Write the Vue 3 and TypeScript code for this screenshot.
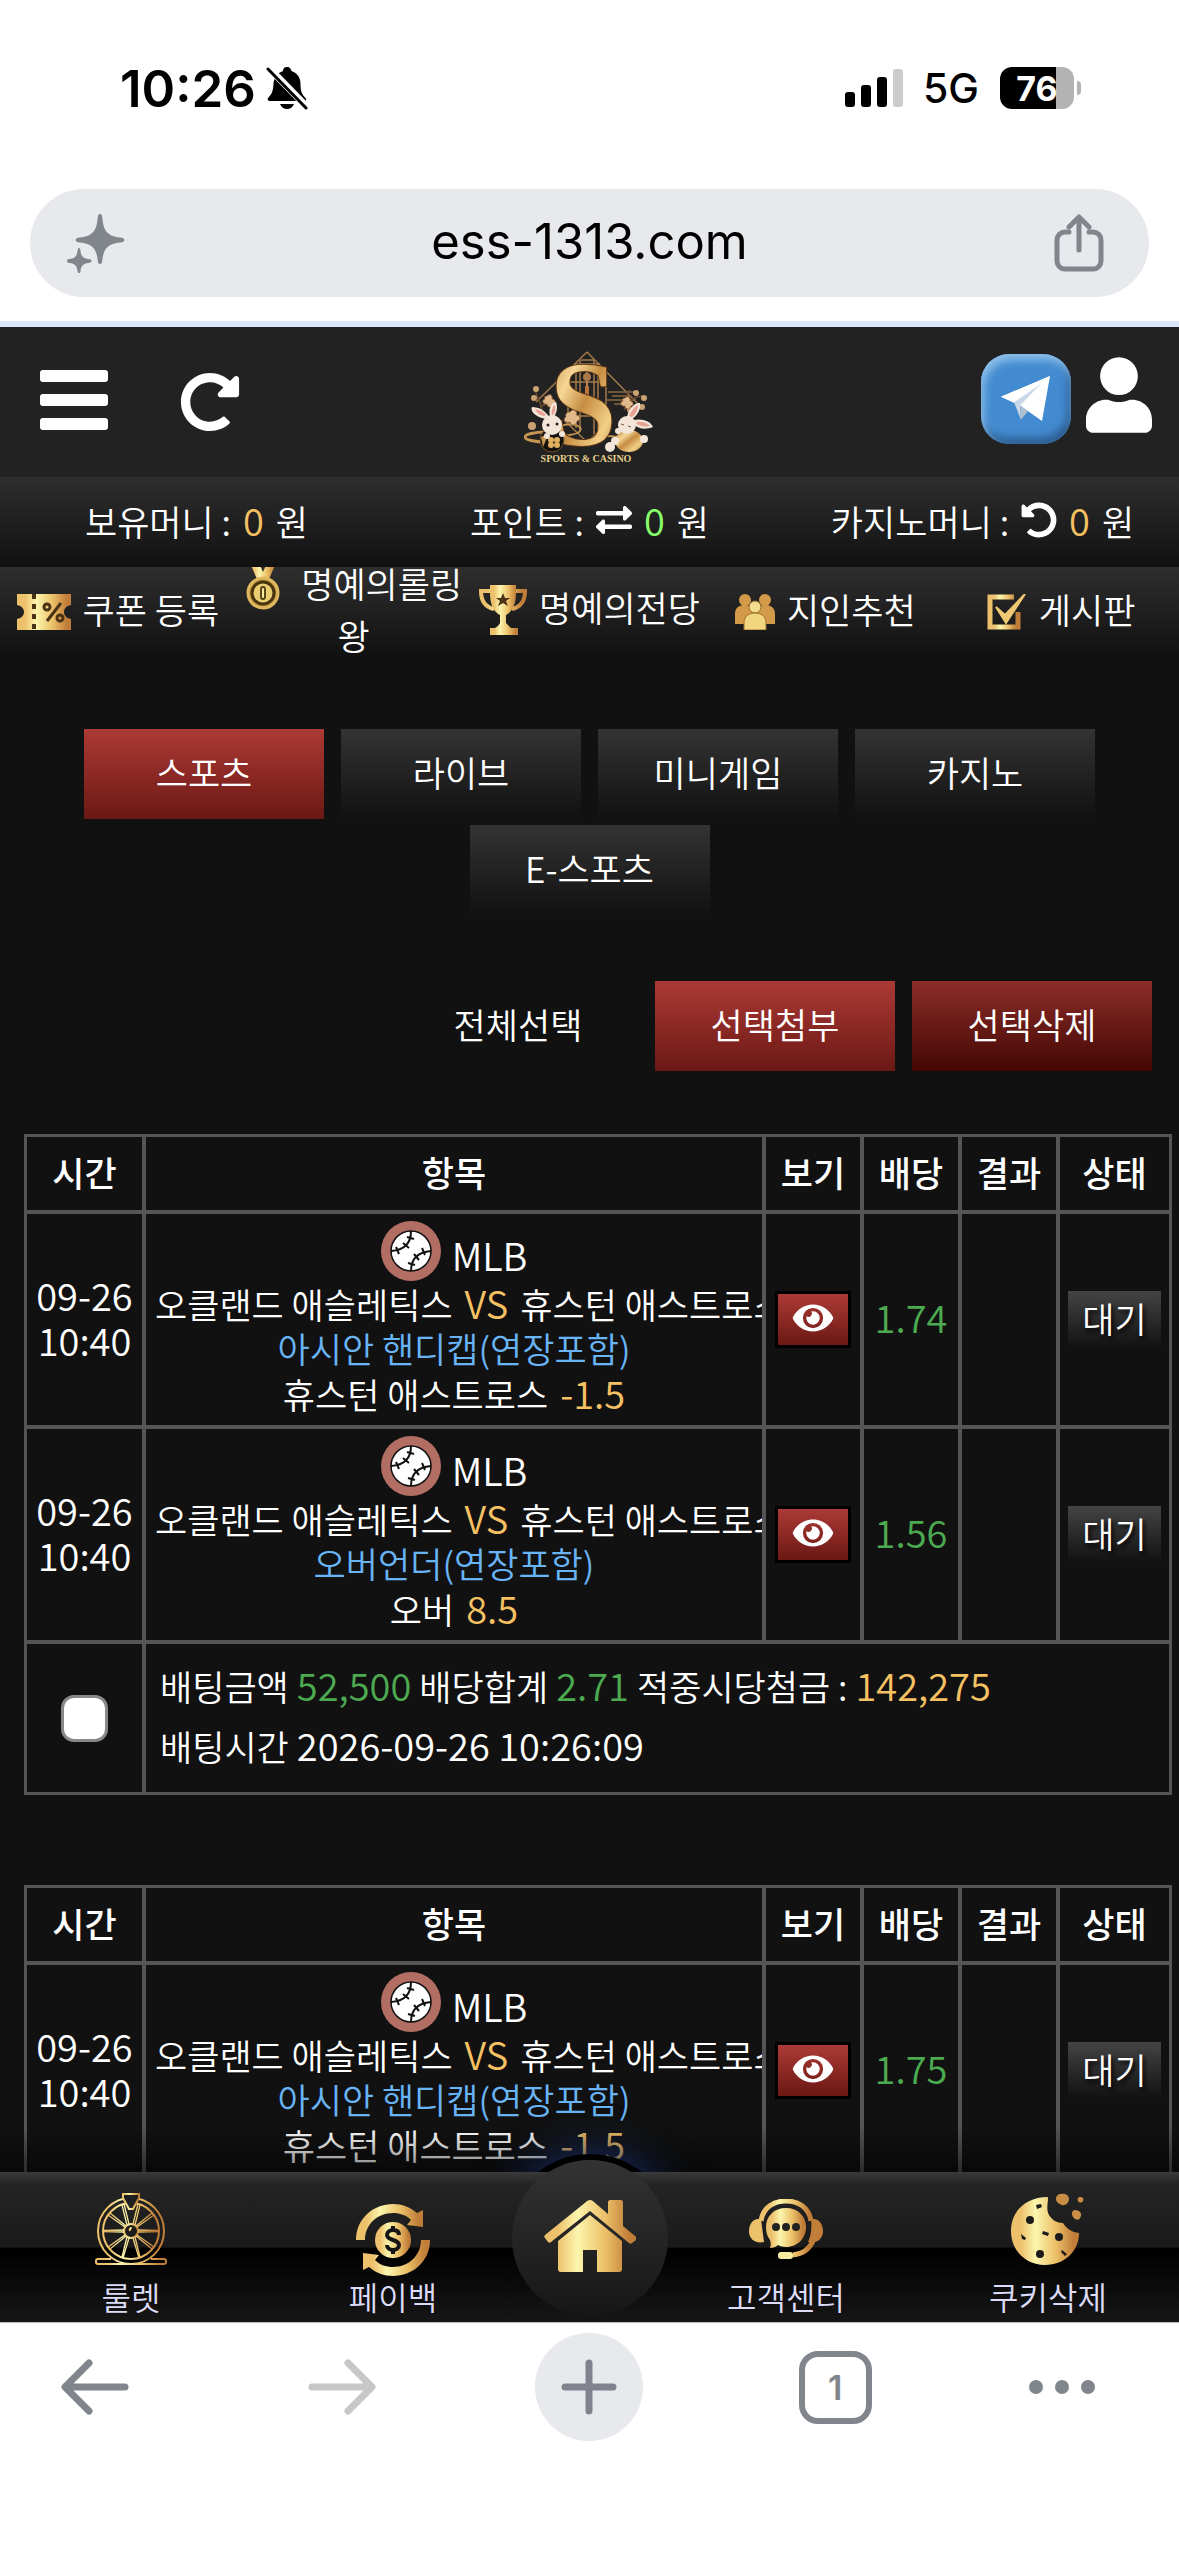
<script setup lang="ts">
import { ref } from 'vue'

interface Pick {
  market: string
  side: string
  line: string
  odds: string
}

interface Slip {
  id: number
  picks: Pick[]
  summary?: { stake: string; odds: string; payout: string; placedAt: string }
}

const tabs = ['스포츠', '라이브', '미니게임', '카지노', 'E-스포츠']
const activeTab = ref('스포츠')
const columns = ['시간', '항목', '보기', '배당', '결과', '상태']
const address = ref('ess-1313.com')

const slips: Slip[] = [
  {
    id: 1,
    picks: [
      { market: '아시안 핸디캡(연장포함)', side: '휴스턴 애스트로스', line: '-1.5', odds: '1.74' },
      { market: '오버언더(연장포함)', side: '오버', line: '8.5', odds: '1.56' },
    ],
    summary: { stake: '52,500', odds: '2.71', payout: '142,275', placedAt: '2026-09-26 10:26:09' },
  },
  {
    id: 2,
    picks: [
      { market: '아시안 핸디캡(연장포함)', side: '휴스턴 애스트로스', line: '-1.5', odds: '1.75' },
    ],
  },
]
</script>

<template>
  <div class="screen">
    <svg class="defs" width="0" height="0" aria-hidden="true">
      <defs>
        <linearGradient id="gold" x1="0" x2="1" y1="0" y2="0">
          <stop offset="0" stop-color="#edc06b" />
          <stop offset="0.14" stop-color="#edc06b" />
          <stop offset="0.36" stop-color="#fbf5ad" />
          <stop offset="0.66" stop-color="#ecc068" />
          <stop offset="0.92" stop-color="#c17e39" />
          <stop offset="1" stop-color="#c17e39" />
        </linearGradient>
        <linearGradient id="goldDeep" x1="0" x2="1" y1="0" y2="1">
          <stop offset="0" stop-color="#b67f37" />
          <stop offset="0.3" stop-color="#f6d795" />
          <stop offset="0.5" stop-color="#c68d43" />
          <stop offset="0.75" stop-color="#f3cf86" />
          <stop offset="1" stop-color="#a86f2c" />
        </linearGradient>
      </defs>
    </svg>

    <header class="status">
      <div class="status-left">
        <span class="clock">10:26</span>
        <svg width="42" height="44" viewBox="0 0 42 44">
          <path d="M21 1c3 0 4 2 4.500 4 6 2 9 7 9 13 0 8 2 11 5 14 1 1 1 3-1 3H4c-2 0-3-2-2-3 4-4 5-7 5.500-14C8 12 11 7 17 5c0-2 1-4 4-4z" fill="#000" />
          <path d="M14 38h14c-1 3-4 5-7 5s-6-2-7-5z" fill="#000" />
          <path d="M2 1l40 41" stroke="#fff" stroke-width="7" />
          <path d="M2 3l38 39" stroke="#000" stroke-width="3" stroke-linecap="round" />
        </svg>
      </div>
      <div class="status-right">
        <svg width="58" height="38" viewBox="0 0 58 38">
          <rect x="0" y="23" width="10" height="15" rx="3" />
          <rect x="16" y="16" width="10" height="22" rx="3" />
          <rect x="32" y="8" width="10" height="30" rx="3" />
          <rect x="48" y="0" width="10" height="38" rx="3" fill="#ccc" />
        </svg>
        <span class="network">5G</span>
        <div class="battery"><span>76</span></div>
        <i class="battery-tip"></i>
      </div>
    </header>

    <div class="address">
      <button class="plain" aria-label="AI">
        <svg width="58" height="60" viewBox="0 0 58 60" fill="#80868b">
          <path d="M33 1c1.500 0 2 1 2.200 3 1.200 14 5 19 18 20.500 3 .3 4 1 4 2.500s-1 2.200-4 2.500c-13 1.500-16.800 6.500-18 18.500-.2 2-.7 3-2.200 3s-2-1-2.200-3c-1.200-12-5-17-18-18.500-3-.3-4-1-4-2.500s1-2.200 4-2.500c13-1.500 16.800-6.500 18-20.500 .2-2 .7-3 2.200-3z" />
          <path d="M12 35c1 0 1.300 1 1.500 3 .6 5 2.500 7.500 8 8 2 .2 3 .8 3 2s-1 1.800-3 2c-5.500.5-7.400 3-8 8-.2 1.500-.5 2-1.500 2s-1.300-.5-1.500-2c-.6-5-2.500-7.500-8-8-2-.2-2.500-.8-2.500-2s.5-1.800 2.500-2c5.500-.5 7.400-3 8-8 .2-2 .5-3 1.500-3z" />
        </svg>
      </button>
      <input v-model="address" class="url" aria-label="address" />
      <button class="plain" aria-label="share">
        <svg width="50" height="58" viewBox="0 0 50 58" fill="none" stroke="#80868b" stroke-width="5" stroke-linecap="round" stroke-linejoin="round">
          <path d="M15 18h-4a8 8 0 0 0-8 8v21a8 8 0 0 0 8 8h28a8 8 0 0 0 8-8V26a8 8 0 0 0-8-8h-4" />
          <path d="M25 36V4M15 13L25 3l10 10" />
        </svg>
      </button>
    </div>
    <div class="progress"></div>

    <main class="site">
      <div class="site-head">
        <div class="head-left">
          <button class="plain burger" aria-label="menu"><i></i><i></i><i></i></button>
          <button class="plain" aria-label="refresh">
            <svg width="60" height="60" viewBox="0 0 512 512" fill="#fff">
              <path d="M256.455 8c66.269.119 126.437 26.233 170.859 68.685l35.715-35.715C478.149 25.851 504 36.559 504 57.941V192c0 13.255-10.745 24-24 24H345.941c-21.382 0-32.090-25.851-16.971-40.971l41.750-41.750c-30.864-28.899-70.801-44.907-113.230-45.273-92.398-.798-170.283 73.977-169.484 169.442C88.764 348.009 162.184 424 256 424c41.127 0 79.997-14.678 110.629-41.556 4.743-4.161 11.906-3.908 16.368.553l39.662 39.662c4.872 4.872 4.631 12.815-.482 17.433C378.202 479.813 319.926 504 256 504 119.034 504 8.001 392.967 8 256.002 7.999 119.193 119.646 7.755 256.455 8z" />
            </svg>
          </button>
        </div>

        <a class="logo" href="#" aria-label="SPORTS &amp; CASINO">
          <svg width="132" height="114" viewBox="0 0 132 114">
            <g fill="none" stroke="#a37a49" stroke-width="1.500">
              <path d="M63 2L12 52M63 2l55 56M63 92L40 70M63 92l24-22" />
              <path d="M56 10v70M52 14v64M70 10v74M74 14v66M44 22v50M82 22v54M50 14h26M44 32h38M44 54h38M44 66h38M57 10h13" />
              <path d="M84 42h26M88 46h18M82 50h30M90 54h14" stroke="#8a6840" />
              <path d="M18 60C16 50 12 46 11 38M18 56c5-2 8-6 8-12M100 60c4-10 10-14 20-14M104 56c-2-8-2-12 2-16" stroke="#6d4b30" />
            </g>
            <ellipse cx="22" cy="87" rx="21" ry="5" fill="none" stroke="#c69552" stroke-width="3" />
            <path d="M36 76c12-4 24 0 20 5s-14 3-20 7M70 88c10-4 22-1 34 0" fill="none" stroke="#c69552" stroke-width="2" />
            <g fill="#c9a272">
              <circle cx="12" cy="39" r="3" /><circle cx="10" cy="48" r="3" /><circle cx="8" cy="76" r="4" />
              <circle cx="112" cy="43" r="3" /><circle cx="120" cy="48" r="3" /><circle cx="106" cy="60" r="3" /><circle cx="118" cy="57" r="3" />
            </g>
            <path d="M63 20v26" stroke="#b9824e" stroke-width="2" />
            <circle cx="63" cy="27" r="4" fill="#a97748" />
            <path d="M61 36h4v10h-4z" fill="#b9743e" />
            <text x="59" y="95" text-anchor="middle" class="logo-s" fill="url(#goldDeep)">S</text>
            <g fill="#e2b98a" stroke="#8f6238" stroke-width="0.800">
              <path d="M23 46c3-3 6 0 5 3 4 0 4 5 1 5-1 4-6 4-6 0-4 1-6-4-2-5-1-2 0-3 2-3z" />
              <path d="M46 62c3-4 8-1 6 3 5 0 5 6 1 6 0 5-7 5-7 1-4 2-8-3-4-5-1-3 1-5 4-5z" />
              <path d="M101 48c3-3 6 0 5 3 4 0 4 5 1 5-1 4-6 4-6 0-4 1-6-4-2-5-1-2 0-3 2-3z" />
            </g>
            <circle cx="28" cy="90" r="12" fill="#17120f" stroke="#6d5130" />
            <g fill="#e0b15f"><circle cx="27" cy="90" r="3" /><circle cx="33" cy="90" r="3" /><circle cx="27" cy="95" r="3" /><circle cx="33" cy="95" r="3" /></g>
            <path d="M17 87l8-4-6 14z" fill="#c69552" />
            <g fill="#f3e6d8">
              <path d="M22 69C10 67 6 60 8 57c7 0 14 4 17 10zM26 66c-2-8 2-14 6-14 2 5 1 10-2 15z" />
              <circle cx="28" cy="75" r="10" /><circle cx="23" cy="86" r="3" /><circle cx="38" cy="84" r="3" />
            </g>
            <path d="M20 66c-5-1-8-4-9-7 5 1 9 3 11 6zM28 65c-1-5 1-9 3-10 1 4 0 7-2 10z" fill="#e8a294" />
            <circle cx="24" cy="75" r="1.500" fill="#222" /><circle cx="33" cy="74" r="1.500" fill="#222" />
            <ellipse cx="105" cy="91" rx="14" ry="11" fill="url(#goldDeep)" />
            <g fill="#f3e6d8">
              <path d="M103 67c2-9 8-15 13-14 1 6-2 12-8 16zM109 70c9-2 18 1 20 7-7 3-15 2-20-3z" />
              <circle cx="103" cy="75" r="9" /><circle cx="94" cy="81" r="3" /><circle cx="120" cy="89" r="4" /><circle cx="86" cy="97" r="5" /><circle cx="91" cy="91" r="4" />
            </g>
            <path d="M105 66c2-5 5-9 9-11 0 5-2 9-6 12zM112 72c6-1 11 1 14 4-5 1-10 0-13-2z" fill="#e8a294" />
            <path d="M97 74l3 1M104 76l3 1" stroke="#7a5a48" />
            <text x="62" y="112" text-anchor="middle" class="logo-name">SPORTS &amp; CASINO</text>
          </svg>
        </a>

        <div class="head-right">
          <a href="#" aria-label="telegram" class="telegram">
            <svg width="50" height="46" viewBox="0 0 50 42" preserveAspectRatio="none">
              <path d="M0 19L49 0 41 41 19 27z" fill="#fff" />
              <path d="M0 19L49 0 13 24z" fill="#fff" />
              <path d="M13 24L40 7 19 27l1 13z" fill="#c8d8e8" />
              <path d="M19 27l8 5-7 8z" fill="#aebfcd" />
            </svg>
          </a>
          <button class="plain" aria-label="my page">
            <svg width="66" height="76" viewBox="0 0 448 512" fill="#fff">
              <path d="M224 256c70.700 0 128-57.300 128-128S294.700 0 224 0 96 57.300 96 128s57.300 128 128 128zm89.600 32h-16.700c-22.200 10.200-46.900 16-72.900 16s-50.600-5.800-72.900-16h-16.700C60.200 288 0 348.200 0 422.400V464c0 26.500 21.500 48 48 48h352c26.500 0 48-21.500 48-48v-41.600c0-74.200-60.200-134.400-134.400-134.400z" />
            </svg>
          </button>
        </div>
      </div>

      <div class="money">
        <div class="parts">보유머니 : <span class="num amber">0</span> <span>원</span></div>
        <div class="parts">
          포인트 :
          <button class="plain" aria-label="convert">
            <svg width="36" height="36" viewBox="0 0 512 512" fill="#fff">
              <path d="M0 168v-16c0-13.255 10.745-24 24-24h360V80c0-21.367 25.899-32.042 40.971-16.971l80 80c9.372 9.373 9.372 24.569 0 33.941l-80 80C409.956 271.982 384 261.456 384 240v-48H24c-13.255 0-24-10.745-24-24zm488 152H128v-48c0-21.314-25.862-32.080-40.971-16.971l-80 80c-9.372 9.373-9.372 24.569 0 33.941l80 80C102.057 463.997 128 453.437 128 432v-48h360c13.255 0 24-10.745 24-24v-16c0-13.255-10.745-24-24-24z" />
            </svg>
          </button>
          <span class="num lime">0</span> <span>원</span>
        </div>
        <div class="parts">
          카지노머니 :
          <button class="plain" aria-label="recall">
            <svg width="36" height="36" viewBox="0 0 512 512" fill="#fff">
              <path transform="translate(512 0) scale(-1 1)" d="M256.455 8c66.269.119 126.437 26.233 170.859 68.685l35.715-35.715C478.149 25.851 504 36.559 504 57.941V192c0 13.255-10.745 24-24 24H345.941c-21.382 0-32.090-25.851-16.971-40.971l41.750-41.750c-30.864-28.899-70.801-44.907-113.230-45.273-92.398-.798-170.283 73.977-169.484 169.442C88.764 348.009 162.184 424 256 424c41.127 0 79.997-14.678 110.629-41.556 4.743-4.161 11.906-3.908 16.368.553l39.662 39.662c4.872 4.872 4.631 12.815-.482 17.433C378.202 479.813 319.926 504 256 504 119.034 504 8.001 392.967 8 256.002 7.999 119.193 119.646 7.755 256.455 8z" />
            </svg>
          </button>
          <span class="num amber">0</span> <span>원</span>
        </div>
      </div>

      <nav class="quick">
        <a href="#">
          <svg width="54" height="36" viewBox="0 0 54 36">
            <path d="M0 0h54v11c-5 1-7 4-7 7s2 6 7 7v11H0V25c5-1 7-4 7-7s-2-6-7-7z" fill="url(#gold)" />
            <path d="M17 0v36" stroke="#4b3316" stroke-width="4" stroke-dasharray="5 5" />
            <path d="M30 27L44 9" stroke="#4b3316" stroke-width="3" />
            <circle cx="30" cy="13" r="3" fill="none" stroke="#4b3316" stroke-width="3" />
            <circle cx="43" cy="24" r="3" fill="none" stroke="#4b3316" stroke-width="3" />
          </svg>쿠폰 등록
        </a>
        <a href="#">
          <svg class="medal" width="36" height="48" viewBox="0 0 36 48">
            <path d="M5 0h9l4 9 4-9h9l-7 16H12z" fill="url(#gold)" />
            <circle cx="18" cy="30" r="15" fill="#b9903f" stroke="#e0b95e" stroke-width="3" />
            <circle cx="18" cy="30" r="11" fill="#e9cd72" stroke="#47340f" stroke-width="3" />
            <rect x="16" y="24" width="4" height="12" rx="2" fill="#f7ec9c" stroke="#5a4316" stroke-width="2" />
          </svg>명예의롤링왕
        </a>
        <a href="#">
          <svg class="cup" width="48" height="50" viewBox="0 0 48 50">
            <path d="M13 6H2c0 10 4 16 13 18M35 6h11c0 10-4 16-13 18" fill="none" stroke="url(#gold)" stroke-width="4" />
            <path d="M11 0h26v8c0 12-4 19-10 22v8c2 2 4 4 5 5h7v7H11v-7h5c2-1 4-3 5-5v-8C15 27 11 20 11 8z" fill="url(#gold)" />
            <path d="M24 8l2 5h5l-4 3 2 5-5-3-5 3 2-5-4-3h5z" fill="#4b3316" />
          </svg>명예의전당
        </a>
        <a href="#">
          <svg width="40" height="36" viewBox="0 0 40 36">
            <g fill="#d39a4a">
              <circle cx="10" cy="6" r="6" /><circle cx="30" cy="6" r="6" />
              <path d="M0 30V20c0-7 5-9 10-9s8 3 8 8v11zM40 30V20c0-7-5-9-10-9s-8 3-8 8v11z" />
            </g>
            <circle cx="20" cy="13" r="6" fill="#f3dc8d" stroke="#9b6f2c" />
            <path d="M9 36v-7c0-7 5-10 11-10s11 3 11 10v7z" fill="#f1d57f" stroke="#9b6f2c" />
          </svg>지인추천
        </a>
        <a href="#">
          <svg width="40" height="36" viewBox="0 0 40 36">
            <path d="M27 3H3v30h28V18" fill="none" stroke="url(#gold)" stroke-width="5" />
            <path d="M9 13l9 8L38 0 19 29z" fill="#efc873" stroke="#efc873" stroke-width="2" />
          </svg>게시판
        </a>
      </nav>

      <div class="tabs">
        <button
          v-for="tab in tabs"
          :key="tab"
          class="tile"
          :class="{ red: tab === activeTab }"
          @click="activeTab = tab"
        >{{ tab }}</button>
      </div>

      <div class="actions">
        <button class="tile clear">전체선택</button>
        <button class="tile red">선택첨부</button>
        <button class="tile dark-red">선택삭제</button>
      </div>

      <table v-for="slip in slips" :key="slip.id" class="slip">
        <colgroup>
          <col class="c-time" /><col /><col class="c-mid" /><col class="c-mid" /><col class="c-mid" /><col class="c-state" />
        </colgroup>
        <thead>
          <tr><th v-for="c in columns" :key="c">{{ c }}</th></tr>
        </thead>
        <tbody>
          <tr v-for="pick in slip.picks" :key="pick.odds">
            <td class="num">09-26<br />10:40</td>
            <td>
              <div class="match">
                <div class="league">
                  <svg width="60" height="60" viewBox="0 0 60 60">
                    <circle cx="30" cy="30" r="30" fill="#b26e62" />
                    <circle cx="30" cy="30" r="20" fill="#fff" stroke="#111" stroke-width="1.500" />
                    <g fill="none" stroke="#111" stroke-width="2">
                      <path d="M30 10C30 21 25 29 10 30M50 30C38 31 30 37 30 50" />
                      <path d="M26 16l7 2M22 22l6 5M15 26l3 7M41 27l3 7M33 33l5 6M27 42l7 2" />
                    </g>
                  </svg>
                  <span class="num">MLB</span>
                </div>
                <div class="parts teams">
                  <span>오클랜드 애슬레틱스</span>
                  <span class="num amber">VS</span>
                  <span>휴스턴 애스트로스</span>
                </div>
                <div class="blue">{{ pick.market }}</div>
                <div class="parts">
                  <span>{{ pick.side }}</span>
                  <span class="num amber">{{ pick.line }}</span>
                </div>
              </div>
            </td>
            <td>
              <button class="view" aria-label="보기">
                <svg width="42" height="36" viewBox="0 0 576 512" fill="#fff">
                  <path d="M572.520 241.400C518.290 135.590 410.930 64 288 64S57.680 135.640 3.480 241.410a32.350 32.350 0 0 0 0 29.190C57.710 376.410 165.070 448 288 448s230.320-71.640 284.520-177.410a32.350 32.350 0 0 0 0-29.190zM288 400a144 144 0 1 1 144-144 143.930 143.930 0 0 1-144 144zm0-240a95.310 95.310 0 0 0-25.310 3.790 47.850 47.850 0 0 1-66.900 66.900A95.780 95.780 0 1 0 288 160z" />
                </svg>
              </button>
            </td>
            <td class="num green">{{ pick.odds }}</td>
            <td></td>
            <td><span class="state">대기</span></td>
          </tr>
          <tr v-if="slip.summary" class="summary">
            <td><input type="checkbox" aria-label="선택" /></td>
            <td colspan="5">
              <div class="parts">
                <span>배팅금액</span>
                <span class="num green">{{ slip.summary.stake }}</span>
                <span>배당합계</span>
                <span class="num green">{{ slip.summary.odds }}</span>
                <span>적중시당첨금 :</span>
                <span class="num amber">{{ slip.summary.payout }}</span>
              </div>
              <div class="parts">
                <span>배팅시간</span>
                <span class="num">{{ slip.summary.placedAt }}</span>
              </div>
            </td>
          </tr>
        </tbody>
      </table>

      <nav class="dock">
        <a href="#">
          <svg width="72" height="72" viewBox="0 0 72 72" fill="none" stroke="url(#gold)" stroke-width="2">
            <circle cx="36" cy="38" r="33" />
            <circle cx="36" cy="38" r="28" />
            <circle cx="36" cy="38" r="7" />
            <path d="M35 38a2 2 0 0 1 2-3" />
            <path d="M43 37l21 .5M43 39l21-.5M29 37L8 37.500M29 39L8 38.500M34 45l-6 20M32 44l-5 20M38 45l6 20M40 44l5 20M42 42l17 12M41 43l16 13M30 42L13 54M31 43L15 56M42 34l17-12M41 33l16-13M30 34L13 22M31 33L15 20M34 31l-5-20M32 32l-5-20M38 31l5-20M40 32l5-20" stroke-width="1.300" />
            <path d="M16 66H3a2 2 0 0 0-2 2v1a2 2 0 0 0 2 2h66a2 2 0 0 0 2-2v-1a2 2 0 0 0-2-2H56" />
            <path d="M28 1h16v4l-6 11h-4L28 5z" fill="#1f1f1f" />
          </svg>
          <span>룰렛</span>
        </a>
        <a href="#" class="low">
          <svg width="74" height="72" viewBox="0 0 74 72">
            <path d="M0 36C0 14 18 0 37 0c9 0 17 3 24 9l6-3v17l-16 -2 4-5C50 11 44 9 37 9 22 9 9 20 9 36z" fill="url(#gold)" />
            <path d="M74 36c0 22-18 36-37 36-9 0-17-3-24-9l-6 3V49l16 2-4 5c5 5 11 7 18 7 15 0 28-11 28-27z" fill="url(#gold)" />
            <circle cx="37" cy="36" r="18" fill="url(#gold)" />
            <path d="M43 31c0-4-3-5-6-5s-6 2-6 5c0 6 12 4 12 10 0 3-3 5-6 5s-6-2-6-5M37 22v4M37 46v4" fill="none" stroke="#161616" stroke-width="4" />
          </svg>
          <span>페이백</span>
        </a>
        <a href="#" class="home" aria-label="home">
          <svg width="92" height="72" viewBox="0 0 92 72" fill="url(#gold)">
            <path d="M46 0c2 0 3 1 4 2l14 12V2c0-1 1-2 2-2h11c1 0 2 1 2 2v24l12 10c2 2 2 3 1 4l-4 3c-1 1-2 1-3 0L46 11 7 42c-1 1-2 1-3 0l-3-4c-1-1-1-2 0-3L42 2c1-1 2-2 4-2zM14 41L46 15l32 26v28c0 2-1 3-3 3H53V50H39v22H17c-2 0-3-1-3-3z" />
          </svg>
        </a>
        <a href="#" class="mid">
          <svg width="74" height="60" viewBox="0 0 74 60">
            <path d="M12 22C14 8 25 2 37 2s23 6 25 20M64 42c-4 9-11 13-20 14" fill="none" stroke="url(#gold)" stroke-width="5" />
            <path d="M9 20h3l3 23c-9 2-15-3-15-11 0-7 4-12 9-12z" fill="#edc06b" />
            <path d="M65 20h-3c1 8 0 17-3 23 9 2 15-3 15-11 0-7-4-12-9-12z" fill="#c17e39" />
            <path d="M37 9c12 0 20 8 20 19s-8 20-20 20c-3 0-6-1-8-2-2 2-5 3-8 3 1-3 1-5 0-8-3-4-4-8-4-13C17 17 25 9 37 9z" fill="url(#gold)" />
            <rect x="29" y="53" width="15" height="7" rx="3" fill="#f8eda0" />
            <circle cx="27" cy="28" r="4" fill="#222" /><circle cx="37" cy="28" r="4" fill="#222" /><circle cx="47" cy="28" r="4" fill="#222" />
          </svg>
          <span>고객센터</span>
        </a>
        <a href="#">
          <svg width="74" height="72" viewBox="0 0 74 72">
            <path d="M37 4c0 8-2 12 1 18 3 5 8 8 14 8 3 5 8 9 16 10 0 18-14 32-34 32S0 57 0 38C0 18 15 4 37 4z" fill="url(#gold)" />
            <path d="M50 1c4-1 8 1 8 5s-4 7-7 6-6-3-6-6 2-5 5-5zM69 4c3 0 4 2 3 4s-4 2-5 0 0-4 2-4zM64 17c4 0 7 3 6 6s-3 5-6 3-5-8 0-9z" fill="#c98d45" />
            <g fill="#1b1b1b">
              <circle cx="19" cy="27" r="4" /><circle cx="48" cy="44" r="4" /><circle cx="29" cy="61" r="4" />
              <path d="M25 12l5-1 1 3-5 2zM10 41l5 4-1 2-3-1zM32 38l6 2-1 3-6-2zM51 57l5 4-2 2-4-4z" />
            </g>
          </svg>
          <span>쿠키삭제</span>
        </a>
      </nav>
    </main>

    <footer class="toolbar">
      <button class="plain" aria-label="back">
        <svg width="68" height="56" viewBox="0 0 68 56" fill="none" stroke="#80868b" stroke-width="7" stroke-linecap="round" stroke-linejoin="round"><path d="M64 28H5M28 4L4 28l24 24" /></svg>
      </button>
      <button class="plain" aria-label="forward">
        <svg width="68" height="56" viewBox="0 0 68 56" fill="none" stroke="#c7c7c7" stroke-width="7" stroke-linecap="round" stroke-linejoin="round"><path d="M4 28h59M40 4l24 24-24 24" /></svg>
      </button>
      <button class="plain add" aria-label="new tab">
        <svg width="56" height="56" viewBox="0 0 56 56" stroke="#80838e" stroke-width="7" stroke-linecap="round"><path d="M28 4v48M4 28h48" /></svg>
      </button>
      <button class="plain"><span class="count">1</span></button>
      <button class="plain more" aria-label="more"><i></i><i></i><i></i></button>
    </footer>
  </div>
</template>

<style>
body {
  margin: 0;
}
</style>

<style scoped>
.screen {
  display: flex;
  flex-direction: column;
  height: 100vh;
  overflow: hidden;
  background: #fff;
  font-family: Inter, "Noto Sans CJK KR", sans-serif;
}
.defs {
  position: absolute;
}
.plain {
  display: inline-flex;
  align-items: center;
  justify-content: center;
  padding: 0;
  border: 0;
  background: none;
  font: inherit;
  color: inherit;
}
a {
  color: inherit;
  text-decoration: none;
}
svg {
  display: block;
  flex: none;
}

.status {
  display: flex;
  justify-content: space-between;
  align-items: center;
  flex: none;
  height: 176px;
  padding: 0 98px 0 120px;
}
.status-left,
.status-right {
  display: flex;
  align-items: center;
}
.status-left {
  gap: 10px;
}
.clock {
  font-size: 51px;
  font-weight: 600;
}
.network {
  margin: 0 21px 0 20px;
  font-size: 41px;
  font-weight: 500;
}
.battery {
  display: flex;
  align-items: center;
  justify-content: center;
  width: 74px;
  height: 42px;
  border-radius: 12px;
  background: linear-gradient(90deg, #000 76%, #b3b3b3 76%);
  color: #fff;
  font-size: 34px;
  font-weight: 700;
}
.battery-tip {
  width: 4px;
  height: 14px;
  margin-left: 3px;
  border-radius: 0 4px 4px 0;
  background: #b3b3b3;
}
.address {
  display: flex;
  align-items: center;
  justify-content: space-between;
  flex: none;
  height: 108px;
  margin: 13px 30px 24px;
  padding: 0 45px 0 37px;
  box-sizing: border-box;
  border-radius: 54px;
  background: #e8e9ed;
}
.url {
  flex: 1;
  min-width: 0;
  padding: 0 0 3px;
  border: 0;
  background: none;
  color: #000;
  font: 400 49px Inter, sans-serif;
  text-align: center;
}
.progress {
  flex: none;
  height: 6px;
  background: #dbe7fa;
}

.site {
  position: relative;
  flex: 1;
  min-height: 0;
  overflow: hidden;
  background: #111;
  color: #fff;
  font-family: "Noto Sans CJK KR", sans-serif;
  font-size: 35px;
  font-weight: 350;
  line-height: 45px;
}
.num {
  font-size: 38px;
}
.parts {
  display: flex;
  align-items: baseline;
  justify-content: center;
  gap: 12px;
  white-space: nowrap;
}
.site-head {
  display: grid;
  grid-template-columns: 1fr auto 1fr;
  align-items: center;
  height: 150px;
  background: #222;
}
.head-left {
  display: flex;
  align-items: center;
  gap: 72px;
  padding-left: 40px;
}
.burger {
  flex-direction: column;
  gap: 12px;
  padding-bottom: 4px;
}
.burger i {
  width: 68px;
  height: 12px;
  border-radius: 3px;
  background: #fff;
}
.logo {
  padding-top: 10px;
}
.logo-s {
  font: bold 120px "Liberation Serif", serif;
  stroke: #5d3715;
  stroke-width: 2px;
  paint-order: stroke;
}
.logo-name {
  font: bold 10px "Liberation Serif", serif;
  fill: #e3cf8b;
}
.head-right {
  display: flex;
  align-items: center;
  justify-content: flex-end;
  gap: 15px;
  padding: 0 27px 6px 0;
}
.head-right .plain {
  padding-bottom: 8px;
}
.telegram {
  display: flex;
  align-items: center;
  justify-content: center;
  width: 90px;
  height: 90px;
  border-radius: 28px;
  background: #438bd0;
  box-shadow: inset 3px 6px 8px #8fc0ea, inset -3px -6px 8px #2b5b8e;
}
.money {
  display: grid;
  grid-template-columns: repeat(3, 1fr);
  align-items: center;
  height: 90px;
  padding-bottom: 4px;
  box-sizing: border-box;
  background: linear-gradient(#2e2e2e, #111);
}
.money .plain {
  align-self: center;
}
.amber {
  color: #f5c163;
}
.lime {
  color: #87ff6b;
}
.blue {
  color: #68b4f5;
}
.green {
  color: #4caa50;
}
.quick {
  display: grid;
  grid-template-columns: repeat(5, 1fr);
  grid-template-rows: 84px;
  align-items: center;
  height: 90px;
  overflow: hidden;
  background: linear-gradient(#2e2e2e, #111);
  line-height: 48px;
  text-align: center;
}
.quick a {
  padding: 0 4px;
}
.quick svg {
  display: inline-block;
  margin-right: 12px;
  vertical-align: -6px;
}
.quick .medal {
  margin-right: 20px;
  vertical-align: -13px;
}
.quick .cup {
  vertical-align: -13px;
}
.tabs {
  display: flex;
  flex-wrap: wrap;
  justify-content: center;
  gap: 6px 17px;
  padding: 72px 70px 66px;
}
.actions {
  display: flex;
  justify-content: flex-end;
  gap: 17px;
  padding: 0 27px 63px;
}
.tile {
  width: 240px;
  height: 90px;
  padding: 0 0 6px;
  border: 0;
  background: linear-gradient(#333, #111);
  color: #fff;
  font: inherit;
}
.red {
  background: linear-gradient(#ac3a36, #6b1814);
}
.dark-red {
  background: linear-gradient(#8c2d29, #440703);
}
.clear {
  background: none;
}

.slip {
  table-layout: fixed;
  width: calc(100% - 31px);
  margin: 0 7px 90px 24px;
  border: 3px solid #555;
  border-spacing: 0;
  text-align: center;
}
.c-time {
  width: 115px;
}
.c-mid {
  width: 98px;
}
.c-state {
  width: 113px;
}
th,
td {
  padding: 0;
}
th {
  height: 69px;
  padding-bottom: 4px;
  font-weight: 500;
}
th + th,
td + td {
  border-left: 4px solid #555;
}
td {
  border-top: 4px solid #555;
}
td.num {
  padding-bottom: 6px;
}
.match {
  height: 195px;
  padding: 8px 9px;
  overflow: hidden;
  white-space: nowrap;
}
.match > div {
  height: 45px;
}
.match .league {
  display: flex;
  justify-content: center;
  align-items: center;
  gap: 11px;
  height: 58px;
}
.match .teams {
  justify-content: flex-start;
}
.league span {
  padding-top: 6px;
}
.view {
  display: flex;
  align-items: center;
  justify-content: center;
  width: 76px;
  height: 57px;
  margin: 0 auto;
  padding: 0 0 4px;
  border: 3px solid #000;
  background: linear-gradient(#ac3a36, #6b1814);
}
.state {
  display: block;
  width: 93px;
  margin: 0 auto;
  padding-bottom: 4px;
  background: linear-gradient(#444, #111);
  line-height: 53px;
  text-shadow: 2px 3px 4px #000;
}
.summary td {
  height: 142px;
  padding-bottom: 6px;
  line-height: 60px;
}
.summary td + td {
  padding-left: 14px;
}
.summary .parts {
  justify-content: flex-start;
  gap: 8px;
  height: 60px;
}
.summary input {
  display: block;
  width: 47px;
  height: 47px;
  margin: 6px auto 0;
  appearance: none;
  border: 3px solid #88898b;
  border-radius: 13px;
  background: #fff;
}

.dock {
  position: absolute;
  right: 0;
  bottom: 0;
  left: 0;
  display: flex;
  height: 150px;
  border-bottom: 1px solid #bbb;
  background: linear-gradient(#3a3a3a, #242424 8%, #1a1a1a 50%, #000 51%, #161616);
  color: #dcdcf8;
  font-size: 32px;
  line-height: 40px;
}
.dock::before {
  content: "";
  position: absolute;
  right: 0;
  bottom: 100%;
  left: 0;
  height: 45px;
  background: linear-gradient(transparent, rgba(0, 0, 0, 0.5));
}
.dock a {
  display: flex;
  flex: 2;
  flex-direction: column;
  align-items: center;
  justify-content: flex-end;
  gap: 11px;
  height: 144px;
}
.dock .low {
  gap: 0;
}
.dock .mid {
  gap: 17px;
}
.dock .home {
  position: relative;
  flex: 1;
  height: 150px;
  justify-content: center;
}
.home::before {
  content: "";
  position: absolute;
  top: -12px;
  left: 50%;
  z-index: 1;
  width: 156px;
  height: 156px;
  margin-left: -78px;
  border-radius: 50%;
  background: linear-gradient(#333, #161616);
}
.home::after {
  content: "";
  position: absolute;
  top: -18px;
  left: 50%;
  width: 168px;
  height: 168px;
  margin-left: -84px;
  border-radius: 50%;
  background: #000;
  box-shadow: 0 0 44px rgba(36, 72, 170, 0.6);
  clip-path: inset(-60px -60px 150px -60px);
}
.home svg {
  position: relative;
  z-index: 2;
  margin-bottom: 22px;
}

.toolbar {
  display: flex;
  justify-content: space-between;
  flex: none;
  height: 233px;
  padding: 10px 84px 0 41px;
  box-sizing: border-box;
}
.toolbar .plain {
  width: 108px;
  height: 108px;
}
.toolbar .add {
  border-radius: 50%;
  background: #e8e9ed;
}
.count {
  display: flex;
  align-items: center;
  justify-content: center;
  width: 73px;
  height: 73px;
  box-sizing: border-box;
  border: 6px solid #80868b;
  border-radius: 19px;
  color: #80868b;
  font-size: 34px;
  font-weight: 600;
}
.toolbar .more {
  width: 67px;
  gap: 12px;
}
.more i {
  width: 14px;
  height: 14px;
  border-radius: 50%;
  background: #80868b;
}
</style>
